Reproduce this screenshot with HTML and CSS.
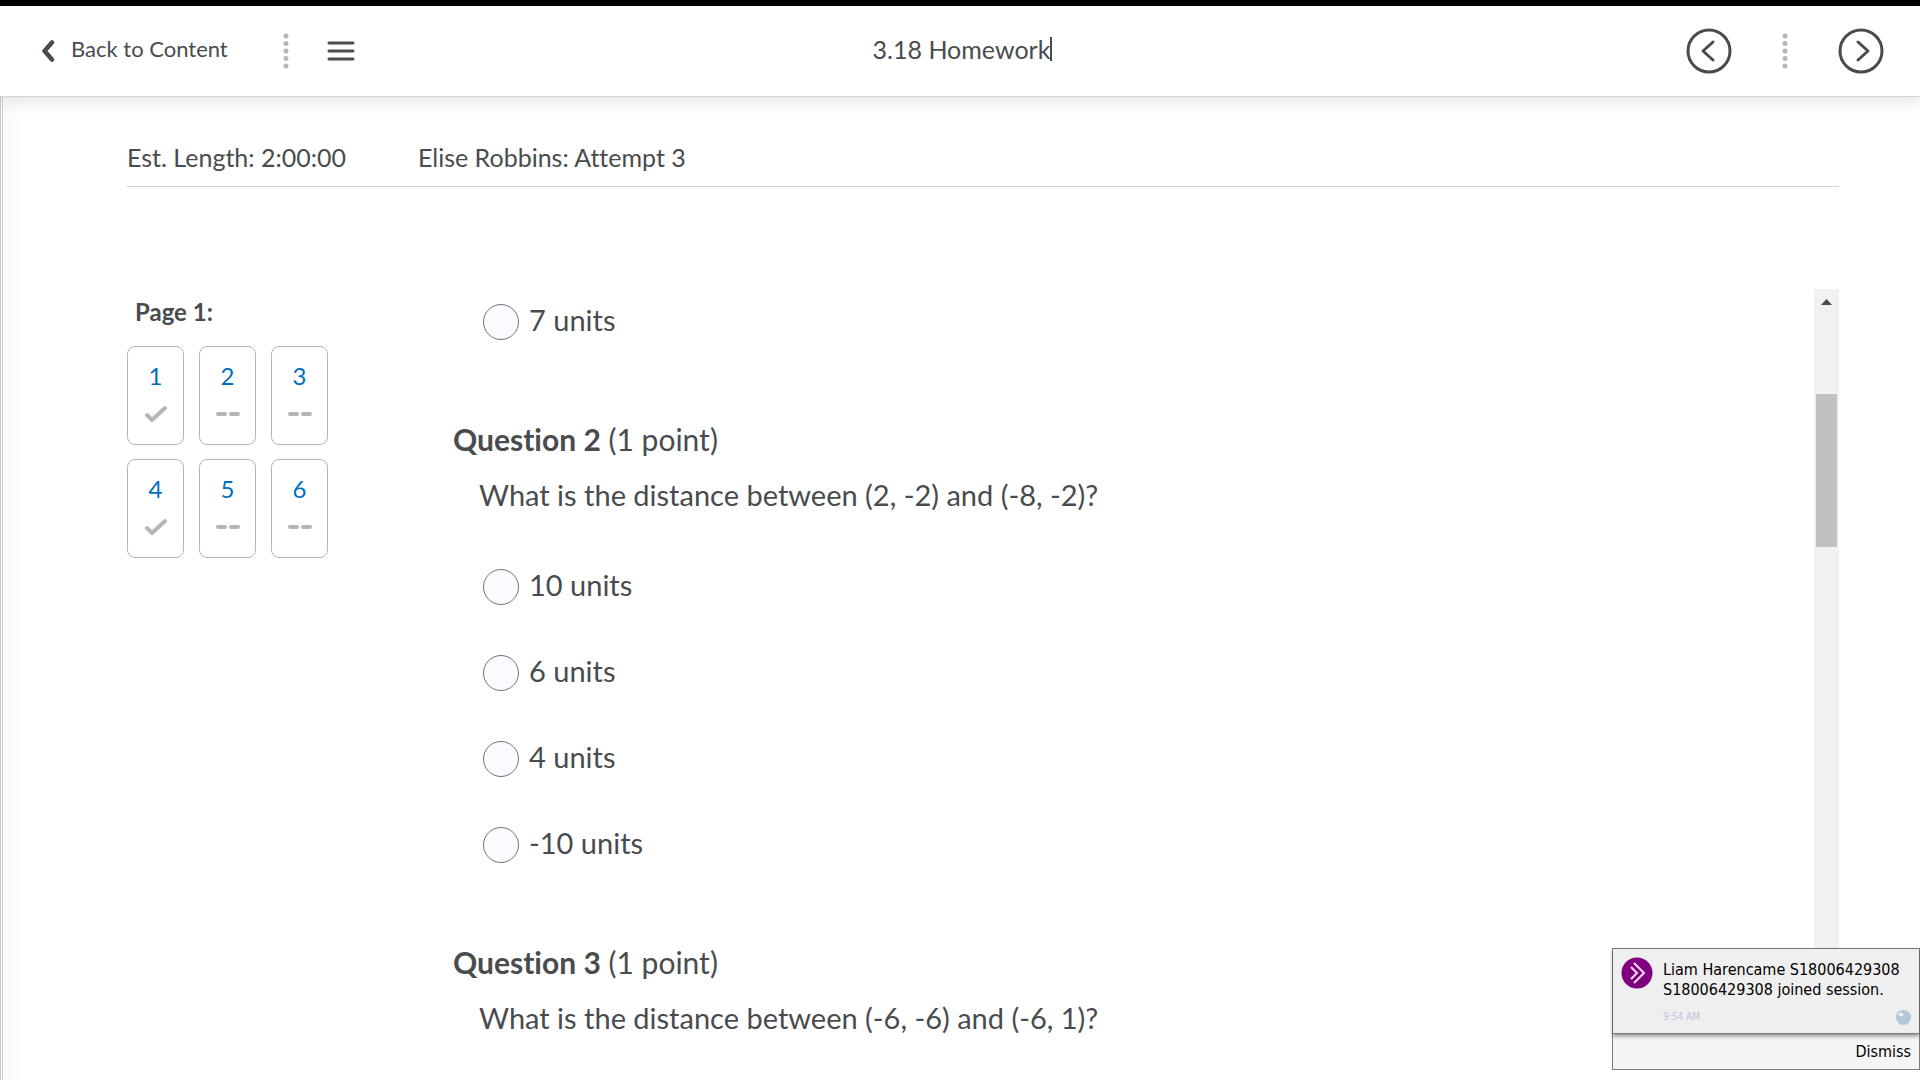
FILE: index.html
```html
<!DOCTYPE html>
<html lang="en">
<head>
    <meta charset="UTF-8">
    <meta name="viewport" content="width=device-width, initial-scale=1.0">
    <title>3.18 Homework</title>
    <link rel="stylesheet" href="styles.css">
</head>
<body>

    <!-- Top bar -->
    <header class="topbar">
        <div class="topbar-left">
            <a href="#" class="back">
                <svg width="14" height="22" viewBox="0 0 14 22"><path d="M11 2.500 3.500 11l7.500 8.500" fill="none" stroke="#494c4e" stroke-width="4.500" stroke-linecap="round" stroke-linejoin="round"/></svg>
                <span>Back to Content</span>
            </a>
            <svg class="dots" width="6" height="36" viewBox="0 0 6 36"><path d="M3 3v31" stroke="#b4b7ba" stroke-width="5" stroke-linecap="round" stroke-dasharray="0 7.5"/></svg>
            <button type="button" class="icon-button" aria-label="Menu">
                <svg width="28" height="20" viewBox="0 0 28 20"><path d="M2 2h24M2 10h24M2 18h24" stroke="#494c4e" stroke-width="3" stroke-linecap="round"/></svg>
            </button>
        </div>
        <h1 class="title">3.18 Homework<span class="caret"></span></h1>
        <div class="topbar-right">
            <button type="button" class="icon-button" aria-label="Previous">
                <svg width="46" height="46" viewBox="0 0 46 46" fill="none" stroke="#494c4e" stroke-width="3" stroke-linecap="round" stroke-linejoin="round"><circle cx="23" cy="23" r="21"/><path d="M27 14l-10 9 10 9"/></svg>
            </button>
            <svg class="dots" width="6" height="36" viewBox="0 0 6 36"><path d="M3 3v31" stroke="#b4b7ba" stroke-width="5" stroke-linecap="round" stroke-dasharray="0 7.5"/></svg>
            <button type="button" class="icon-button" aria-label="Next">
                <svg width="46" height="46" viewBox="0 0 46 46" fill="none" stroke="#494c4e" stroke-width="3" stroke-linecap="round" stroke-linejoin="round"><circle cx="23" cy="23" r="21"/><path d="M20 14l10 9-10 9"/></svg>
            </button>
        </div>
    </header>

    <main class="page">
        <div class="info">
            <span>Est. Length: 2:00:00</span>
            <span>Elise Robbins: Attempt 3</span>
        </div>

        <div class="quiz">
            <!-- Question numbers -->
            <nav class="sidebar">
                <h2>Page 1:</h2>
                <div class="numbers">
                    <a href="#q1" class="number">1
                        <svg width="22" height="18" viewBox="0 0 22 18"><path d="M2 10l5 5L20 3" class="mark"/></svg>
                    </a>
                    <a href="#q2" class="number">2
                        <svg width="24" height="18" viewBox="0 0 24 18"><path d="M2 9h7M15 9h7" class="mark"/></svg>
                    </a>
                    <a href="#q3" class="number">3
                        <svg width="24" height="18" viewBox="0 0 24 18"><path d="M2 9h7M15 9h7" class="mark"/></svg>
                    </a>
                    <a href="#q4" class="number">4
                        <svg width="22" height="18" viewBox="0 0 22 18"><path d="M2 10l5 5L20 3" class="mark"/></svg>
                    </a>
                    <a href="#q5" class="number">5
                        <svg width="24" height="18" viewBox="0 0 24 18"><path d="M2 9h7M15 9h7" class="mark"/></svg>
                    </a>
                    <a href="#q6" class="number">6
                        <svg width="24" height="18" viewBox="0 0 24 18"><path d="M2 9h7M15 9h7" class="mark"/></svg>
                    </a>
                </div>
            </nav>

            <!-- Questions -->
            <form class="questions">
                <section id="q1">
                    <div class="answers">
                        <label class="answer"><input type="radio" name="q1"><span>7 units</span></label>
                    </div>
                </section>
                <section id="q2">
                    <h2><b>Question 2</b> (1 point)</h2>
                    <p>What is the distance between (2, -2) and (-8, -2)?</p>
                    <div class="answers">
                        <label class="answer"><input type="radio" name="q2"><span>10 units</span></label>
                        <label class="answer"><input type="radio" name="q2"><span>6 units</span></label>
                        <label class="answer"><input type="radio" name="q2"><span>4 units</span></label>
                        <label class="answer"><input type="radio" name="q2"><span>-10 units</span></label>
                    </div>
                </section>
                <section id="q3">
                    <h2><b>Question 3</b> (1 point)</h2>
                    <p>What is the distance between (-6, -6) and (-6, 1)?</p>
                </section>
            </form>

            <div class="scrollbar">
                <svg width="11" height="6" viewBox="0 0 11 6"><path d="M0 6 5.500 0 11 6z" fill="#494c4e"/></svg>
                <div class="thumb"></div>
            </div>
        </div>
    </main>

    <!-- Session notification -->
    <aside class="toast">
        <div class="toast-body">
            <svg width="32" height="32" viewBox="0 0 32 32"><circle cx="16" cy="16" r="15.500" fill="#800080"/><path d="M10 10l6 6-6 6M13 6l10 10-10 10" fill="none" stroke="#f3dcf3" stroke-width="2"/></svg>
            <div class="toast-text">
                <p>Liam Harencame S18006429308 S18006429308 joined session.</p>
                <div class="toast-meta">
                    <time>9:54 AM</time>
                    <svg width="15" height="15" viewBox="0 0 15 15"><circle cx="7.500" cy="7.500" r="7.500" fill="#b5c7da"/><ellipse cx="5" cy="4.500" rx="2.500" ry="2" fill="#e8eff6"/></svg>
                </div>
            </div>
        </div>
        <div class="toast-footer">
            <button type="button">Dismiss</button>
        </div>
    </aside>

</body>
</html>
```
FILE: styles.css
```css
* { margin: 0; padding: 0; box-sizing: border-box; }
body { height: 100vh; display: flex; flex-direction: column; overflow: hidden; background: #fff; color: #494c4e; font-family: Lato, sans-serif; font-size: 25px; font-variant-ligatures: none; border-top: 6px solid #000; }
a { color: inherit; text-decoration: none; }
button { border: none; background: none; font: inherit; color: inherit; cursor: pointer; }
svg { display: block; flex: none; }

/* Top bar */
.topbar { display: grid; grid-template-columns: 1fr auto 1fr; align-items: center; height: 91px; padding: 0 36px 0 41px; border-bottom: 1px solid #d3d5d7; box-shadow: 0 4px 16px rgba(0, 0, 0, 0.12); position: relative; background: #fff; }
.topbar-left, .topbar-right { display: flex; align-items: center; }
.topbar-right { justify-content: flex-end; gap: 50px; }
.back { display: flex; align-items: center; gap: 16px; font-size: 22px; line-height: 28px; }
.back span { padding-bottom: 4px; }
.topbar-left .dots { margin: 0 38px 0 55px; }
.title { display: flex; align-items: center; padding-bottom: 4px; font-size: 25px; line-height: 28px; font-weight: 400; }
.caret { width: 2px; height: 24px; background: #494c4e; }

.page { flex: 1; min-height: 0; display: flex; flex-direction: column; padding: 44px 81px 0 124px; border-left: 3px double #c5cbd2; background: linear-gradient(to right, #f8fafc, #fff 20px); }
.info { display: flex; gap: 72px; padding-bottom: 13px; line-height: 32px; border-bottom: 1px solid #cdd0d3; }
.quiz { flex: 1; min-height: 0; display: flex; margin-top: 102px; }

/* Question numbers */
.sidebar { width: 326px; padding-top: 7px; }
.sidebar h2 { font-size: 24px; line-height: 32px; padding-left: 8px; }
.numbers { display: grid; grid-template-columns: repeat(3, 57px); gap: 14px 15px; margin-top: 18px; }
.number { display: flex; flex-direction: column; align-items: center; gap: 13px; height: 99px; padding-top: 13px; font-size: 24px; line-height: 32px; color: #006fbf; border: 1px solid #b4b7ba; border-radius: 8px; }
.mark { fill: none; stroke: #b4b7ba; stroke-width: 4; stroke-linecap: round; stroke-linejoin: round; }

/* Questions */
.questions { flex: 1; min-width: 0; overflow: hidden; padding-top: 15px; font-size: 29px; line-height: 36px; }
.questions h2 { font-size: 30px; font-weight: 400; }
.questions section { margin-bottom: 81px; }
.questions p { margin: 20px 0 56px 26px; }
.answers { display: grid; gap: 50px; padding-left: 30px; }
.answer { display: flex; align-items: center; gap: 10px; height: 36px; }
.answer span { padding-bottom: 4px; }
.answer input { appearance: none; width: 36px; height: 36px; border: 1px solid #6e7376; border-radius: 50%; background: #f9fbff; }

.scrollbar { width: 25px; padding: 10px 2px 0; background: #f1f1f1; margin-bottom: 20px; }
.scrollbar svg { margin: 0 auto; }
.thumb { height: 153px; margin-top: 89px; background: #c1c1c1; }

/* Notification */
.toast { position: absolute; right: 0; bottom: 10px; width: 308px; border: 1px solid #7c7c7c; background: #f5f5f5; color: #000; font-family: "DejaVu Sans Condensed", "DejaVu Sans", sans-serif; font-size: 16px; line-height: 20px; }
.toast-body { display: flex; gap: 10px; padding: 8px 8px 6px; background: #efefef; border-bottom: 1px solid #7c7c7c; box-shadow: 0 2px 4px rgba(0, 0, 0, 0.45); }
.toast-text { flex: 1; padding-top: 3px; }
.toast-meta { display: flex; justify-content: space-between; align-items: center; margin-top: 7px; font-size: 10px; color: #b5c7da; }
.toast-footer { display: flex; justify-content: flex-end; padding: 8px 8px 7px; }
```
